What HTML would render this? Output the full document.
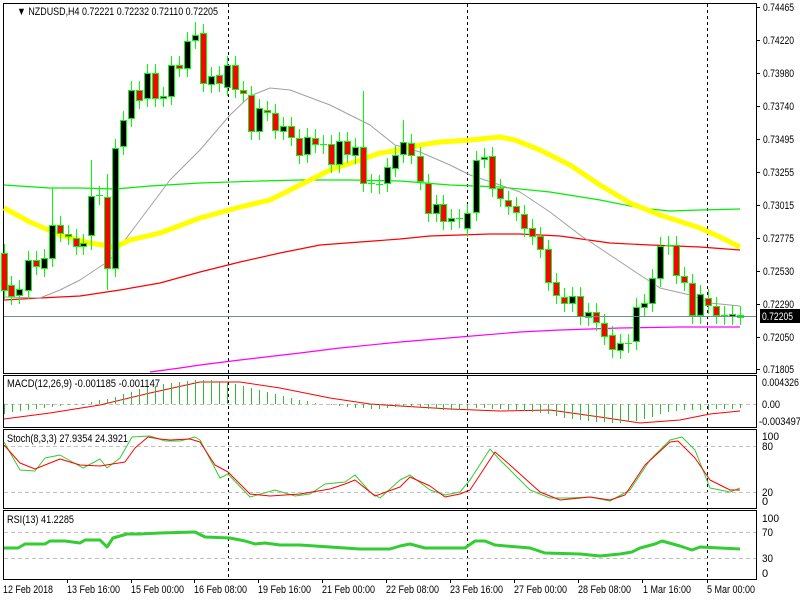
<!DOCTYPE html>
<html><head><meta charset="utf-8"><style>
body{margin:0;background:#fff;width:800px;height:600px;overflow:hidden;font-family:"Liberation Sans",sans-serif}
svg{position:absolute;left:0;top:0}
.t{font-family:"Liberation Sans",sans-serif;font-size:11px;fill:#000}
</style></head><body>
<svg id="s" width="800" height="600" viewBox="0 0 800 600" xmlns="http://www.w3.org/2000/svg" shape-rendering="crispEdges">
<rect width="800" height="600" fill="#fff"/>
<g id="grid" stroke="#000" fill="none" stroke-width="1">
<rect x="3.5" y="3.5" width="753" height="370"/>
<rect x="3.5" y="375.5" width="753" height="52"/>
<rect x="3.5" y="429.5" width="753" height="79"/>
<rect x="3.5" y="510.5" width="753" height="69"/>
</g>
<g stroke="#000">
<line x1="757" y1="7.5" x2="760" y2="7.5"/><line x1="757" y1="40.5" x2="760" y2="40.5"/><line x1="757" y1="73.5" x2="760" y2="73.5"/><line x1="757" y1="106.5" x2="760" y2="106.5"/><line x1="757" y1="139.5" x2="760" y2="139.5"/><line x1="757" y1="172.5" x2="760" y2="172.5"/><line x1="757" y1="205.5" x2="760" y2="205.5"/><line x1="757" y1="238.5" x2="760" y2="238.5"/><line x1="757" y1="271.5" x2="760" y2="271.5"/><line x1="757" y1="304.5" x2="760" y2="304.5"/><line x1="757" y1="337.5" x2="760" y2="337.5"/><line x1="757" y1="369.5" x2="760" y2="369.5"/>
<line x1="67.5" y1="580" x2="67.5" y2="583"/><line x1="131.5" y1="580" x2="131.5" y2="583"/><line x1="194.5" y1="580" x2="194.5" y2="583"/><line x1="258.5" y1="580" x2="258.5" y2="583"/><line x1="322.5" y1="580" x2="322.5" y2="583"/><line x1="386.5" y1="580" x2="386.5" y2="583"/><line x1="450.5" y1="580" x2="450.5" y2="583"/><line x1="514.5" y1="580" x2="514.5" y2="583"/><line x1="578.5" y1="580" x2="578.5" y2="583"/><line x1="642.5" y1="580" x2="642.5" y2="583"/><line x1="707.5" y1="580" x2="707.5" y2="583"/>
</g>
<g stroke="#000" stroke-dasharray="3,3">
<line x1="228.5" y1="4" x2="228.5" y2="579"/>
<line x1="467.5" y1="4" x2="467.5" y2="579"/>
<line x1="707.5" y1="4" x2="707.5" y2="579"/>
</g>
<g stroke="#c0c0c0" stroke-dasharray="4,3">
<line x1="4" y1="404.5" x2="756" y2="404.5"/>
<line x1="4" y1="446.5" x2="756" y2="446.5"/>
<line x1="4" y1="492.5" x2="756" y2="492.5"/>
<line x1="4" y1="532.5" x2="756" y2="532.5"/>
<line x1="4" y1="558.5" x2="756" y2="558.5"/>
</g>
<g id="lines" fill="none" shape-rendering="auto"></g>
<g id="candles"></g>
<line x1="4" y1="316.5" x2="756" y2="316.5" stroke="#778899"/>
<rect x="760" y="309" width="40" height="14" fill="#000"/>
<g lengthAdjust="spacingAndGlyphs">
<text x="762" y="320" class="t" style="fill:#fff" textLength="31" lengthAdjust="spacingAndGlyphs">0.72205</text>
<text x="17" y="15" class="t" textLength="201" lengthAdjust="spacingAndGlyphs">▼ NZDUSD,H4  0.72221 0.72232 0.72110 0.72205</text>
<text x="763" y="11" class="t" textLength="31" lengthAdjust="spacingAndGlyphs">0.74465</text>
<text x="763" y="44" class="t" textLength="31" lengthAdjust="spacingAndGlyphs">0.74220</text>
<text x="763" y="77" class="t" textLength="31" lengthAdjust="spacingAndGlyphs">0.73980</text>
<text x="763" y="110" class="t" textLength="31" lengthAdjust="spacingAndGlyphs">0.73740</text>
<text x="763" y="143" class="t" textLength="31" lengthAdjust="spacingAndGlyphs">0.73495</text>
<text x="763" y="176" class="t" textLength="31" lengthAdjust="spacingAndGlyphs">0.73255</text>
<text x="763" y="209" class="t" textLength="31" lengthAdjust="spacingAndGlyphs">0.73015</text>
<text x="763" y="242" class="t" textLength="31" lengthAdjust="spacingAndGlyphs">0.72775</text>
<text x="763" y="275" class="t" textLength="31" lengthAdjust="spacingAndGlyphs">0.72530</text>
<text x="763" y="308" class="t" textLength="31" lengthAdjust="spacingAndGlyphs">0.72290</text>
<text x="763" y="341" class="t" textLength="31" lengthAdjust="spacingAndGlyphs">0.72050</text>
<text x="763" y="373" class="t" textLength="31" lengthAdjust="spacingAndGlyphs">0.71805</text>
<text x="7" y="387" class="t" textLength="153" lengthAdjust="spacingAndGlyphs">MACD(12,26,9) -0.001185 -0.001147</text>
<text x="762" y="386" class="t" textLength="37" lengthAdjust="spacingAndGlyphs">0.004326</text>
<text x="762" y="408" class="t" textLength="18" lengthAdjust="spacingAndGlyphs">0.00</text>
<text x="759" y="425" class="t" textLength="42" lengthAdjust="spacingAndGlyphs">-0.003497</text>
<text x="7" y="442" class="t" textLength="121" lengthAdjust="spacingAndGlyphs">Stoch(8,3,3) 27.9354 24.3921</text>
<text x="762" y="440" class="t" textLength="17" lengthAdjust="spacingAndGlyphs">100</text>
<text x="762" y="450" class="t" textLength="11" lengthAdjust="spacingAndGlyphs">80</text>
<text x="762" y="496" class="t" textLength="11" lengthAdjust="spacingAndGlyphs">20</text>
<text x="762" y="505" class="t">0</text>
<text x="7" y="523" class="t" textLength="67" lengthAdjust="spacingAndGlyphs">RSI(13) 41.2285</text>
<text x="762" y="522" class="t" textLength="17" lengthAdjust="spacingAndGlyphs">100</text>
<text x="762" y="536" class="t" textLength="11" lengthAdjust="spacingAndGlyphs">70</text>
<text x="762" y="562" class="t" textLength="11" lengthAdjust="spacingAndGlyphs">30</text>
<text x="762" y="577" class="t">0</text>
<text x="3" y="593" class="t" textLength="50" lengthAdjust="spacingAndGlyphs">12 Feb 2018</text>
<text x="67" y="593" class="t" textLength="53" lengthAdjust="spacingAndGlyphs">13 Feb 16:00</text>
<text x="131" y="593" class="t" textLength="53" lengthAdjust="spacingAndGlyphs">15 Feb 00:00</text>
<text x="194" y="593" class="t" textLength="53" lengthAdjust="spacingAndGlyphs">16 Feb 08:00</text>
<text x="258" y="593" class="t" textLength="53" lengthAdjust="spacingAndGlyphs">19 Feb 16:00</text>
<text x="322" y="593" class="t" textLength="53" lengthAdjust="spacingAndGlyphs">21 Feb 00:00</text>
<text x="386" y="593" class="t" textLength="53" lengthAdjust="spacingAndGlyphs">22 Feb 08:00</text>
<text x="450" y="593" class="t" textLength="53" lengthAdjust="spacingAndGlyphs">23 Feb 16:00</text>
<text x="514" y="593" class="t" textLength="53" lengthAdjust="spacingAndGlyphs">27 Feb 00:00</text>
<text x="578" y="593" class="t" textLength="53" lengthAdjust="spacingAndGlyphs">28 Feb 08:00</text>
<text x="643" y="593" class="t" textLength="48" lengthAdjust="spacingAndGlyphs">1 Mar 16:00</text>
<text x="707" y="593" class="t" textLength="48" lengthAdjust="spacingAndGlyphs">5 Mar 00:00</text>
</g>
</svg>
<script>
var NS="http://www.w3.org/2000/svg";
function el(p,n,a){var e=document.createElementNS(NS,n);for(var k in a)e.setAttribute(k,a[k]);p.appendChild(e);return e;}
var L=document.getElementById('lines'),C=document.getElementById('candles');
function pl(pts,c,w){el(L,'polyline',{points:pts.map(function(p){return p.join(',')}).join(' '),stroke:c,'stroke-width':w,'stroke-linejoin':'round'});}
pl([[4,300],[40,298],[80,296],[120,290],[160,283],[200,272],[240,262],[280,253],[320,245],[360,242],[400,239],[430,236],[460,235],[490,234],[520,234],[560,236],[610,243],[650,245],[700,247],[740,250]],'#ff0000',1.2);
pl([[150,372],[180,368],[200,365],[240,360],[300,353],[340,348],[400,342],[460,337],[520,332],[560,330],[620,328],[680,327],[740,327]],'#ff00ff',1.2);
pl([[4,185],[50,188],[80,188],[115,189],[150,186],[200,183],[260,181],[300,180],[350,180],[400,181],[450,185],[500,187],[550,192],[600,200],[640,208],[670,211],[700,210],[740,209]],'#00ee00',1.2);
pl([[4,297],[40,298],[60,290],[80,280],[110,260],[140,220],[170,180],[200,150],[230,115],[250,96],[270,88],[290,90],[330,105],[370,125],[395,145],[420,152],[450,165],[470,175],[500,185],[520,192],[550,212],[580,235],[610,255],[640,275],[660,288],[690,295],[710,303],[740,306]],'#a0a0a0',1);
pl([[4,208],[30,222],[60,235],[90,243],[115,247],[130,240],[160,233],[200,218],[240,207],[270,200],[290,190],[310,180],[330,170],[360,160],[380,153],[400,150],[420,145],[440,142],[470,140],[500,137],[515,140],[540,150],[570,165],[600,185],[630,203],[660,215],[700,228],[720,237],[740,247]],'#ffff00',5);
var cs=[[4,253,290,'r'],[11,285,296,'r'],[19,289,295,'b'],[28,260,290,'b'],[36,260,266,'r'],[44,258,268,'b'],[52,225,258,'b',188],[60,225,233,'r'],[68,234,236,'r'],[76,238,246,'r'],[83,243,246,'b'],[91,196,235,'b',160,250],[99,195,196,'d'],[107,197,268,'r',174,290],[115,148,268,'b'],[123,120,146,'b'],[131,90,118,'b'],[139,90,100,'r'],[147,73,98,'b'],[155,73,98,'r'],[163,96,98,'b'],[171,65,96,'b'],[179,65,68,'r'],[187,41,68,'b'],[195,35,40,'b',22],[203,33,83,'r'],[211,76,84,'b'],[219,75,83,'r'],[227,65,87,'b'],[235,65,89,'r'],[243,90,93,'r'],[251,95,131,'r'],[259,108,131,'b'],[267,110,112,'r'],[275,113,130,'r'],[283,126,131,'b'],[291,126,137,'r'],[299,138,155,'r'],[307,137,154,'b'],[315,138,144,'r'],[323,144,145,'d'],[331,144,164,'r'],[339,141,164,'b'],[347,141,154,'r'],[355,147,155,'b'],[363,147,183,'r',91],[371,183,184,'d'],[379,184,185,'d'],[387,167,183,'b'],[395,155,168,'b'],[403,142,154,'b',120],[411,143,155,'r'],[420,156,181,'r'],[428,183,213,'r'],[436,204,213,'b'],[443,204,221,'r'],[451,218,221,'b'],[459,218,219,'d'],[467,213,228,'b'],[476,160,212,'b'],[484,157,159,'b'],[492,156,188,'r'],[500,188,198,'r'],[508,200,206,'r'],[516,206,212,'r'],[524,214,228,'r'],[532,228,236,'r'],[540,236,249,'r'],[548,249,282,'r'],[556,282,295,'r'],[564,297,303,'r'],[572,296,303,'b'],[580,296,316,'r'],[588,312,317,'b'],[596,312,322,'r'],[604,323,336,'r'],[612,335,349,'r'],[620,343,350,'b'],[628,343,344,'d'],[636,307,341,'b'],[644,303,307,'b'],[652,278,303,'b'],[660,246,278,'b'],[668,245,246,'d'],[676,245,275,'r'],[684,276,282,'r'],[692,283,315,'r'],[700,294,315,'b'],[708,298,305,'r'],[716,306,315,'r'],[724,315,316,'d'],[732,314,316,'b'],[740,315,316,'r']];
cs.forEach(function(c){var x=c[0],t=c[1],b=c[2],wt=c[4]||t-9,wb=c[5]||b+9;
el(C,'line',{x1:x+.5,x2:x+.5,y1:wt,y2:wb,stroke:'#00ff00'});
if(c[3]=='d'){el(C,'line',{x1:x-3,x2:x+4,y1:t+.5,y2:t+.5,stroke:'#00ff00'});}
else el(C,'rect',{x:x-2.5,y:t+.5,width:6,height:Math.max(b-t,2),fill:c[3]=='b'?'#000':'#ff0000',stroke:'#00ff00'});});
var H=[[4,414],[12,412],[20,411],[28,410],[36,409],[44,408],[52,407],[60,406],[68,405],[76,405],[83,405],[91,402],[99,400],[107,399],[115,397],[123,394],[131,392],[139,389],[147,387],[155,386],[163,384],[171,383],[179,382],[187,381],[195,380],[203,380],[211,380],[219,381],[227,382],[235,384],[243,386],[251,388],[259,390],[267,392],[275,394],[283,396],[291,398],[299,400],[307,401],[315,403],[323,404],[331,405],[339,406],[347,407],[355,408],[363,408],[371,409],[379,409],[387,408],[395,407],[403,407],[411,407],[420,408],[428,409],[436,409],[443,410],[451,410],[459,410],[467,409],[476,408],[484,408],[492,409],[500,409],[508,410],[516,410],[524,411],[532,412],[540,413],[548,414],[556,416],[564,418],[572,419],[580,420],[588,421],[596,422],[604,422],[612,423],[620,423],[628,422],[636,421],[644,419],[652,417],[660,414],[668,412],[676,411],[684,410],[692,410],[700,410],[708,410],[716,409],[724,409],[732,409],[740,408]];
H.forEach(function(h){el(C,'line',{x1:h[0]+.5,x2:h[0]+.5,y1:404,y2:h[1],stroke:'#33bb33'});});
pl([[4,419],[50,413],[100,405],[150,393],[200,382],[240,382],[280,388],[330,398],[370,404],[400,406],[450,409],[500,411],[550,410],[600,417],[640,423],[680,420],[710,414],[740,411]],'#ff0000',1);
pl([[4,442],[20,470],[35,471],[45,458],[60,455],[83,468],[100,459],[107,468],[120,458],[132,437],[150,436],[165,441],[180,441],[195,437],[200,440],[220,478],[228,474],[250,497],[275,490],[295,496],[310,494],[325,484],[345,482],[355,475],[370,492],[380,498],[400,480],[410,475],[430,490],[445,495],[460,492],[470,480],[490,449],[500,460],[530,490],[550,498],[570,498],[590,497],[610,501],[630,490],[650,460],[670,440],[682,437],[695,450],[710,488],[730,492],[740,488]],'#33cc33',1);
pl([[4,445],[20,463],[35,469],[60,459],[80,465],[100,466],[125,462],[135,448],[148,437],[160,439],[170,440],[190,439],[200,442],[215,465],[228,472],[250,494],[270,496],[300,494],[330,489],[345,484],[355,480],[375,496],[400,487],[410,477],[430,486],[445,497],[460,494],[470,490],[495,452],[510,465],[540,492],[560,500],[590,497],[610,500],[625,495],[645,465],[670,442],[678,441],[695,458],[710,480],[730,490],[740,490]],'#ff0000',1);
pl([[4,548],[18,548],[25,544],[45,544],[50,541],[65,541],[80,543],[85,540],[100,540],[107,547],[113,538],[127,534],[140,534],[160,533],[195,532],[205,537],[230,538],[245,541],[255,544],[265,543],[280,545],[300,545],[330,547],[360,549],[390,549],[400,546],[410,544],[425,548],[465,548],[475,541],[485,541],[495,545],[530,548],[545,553],[580,554],[600,556],[620,554],[632,552],[640,548],[655,544],[662,541],[680,546],[692,550],[700,547],[740,549]],'#33cc33',3);
</script>
</body></html>
